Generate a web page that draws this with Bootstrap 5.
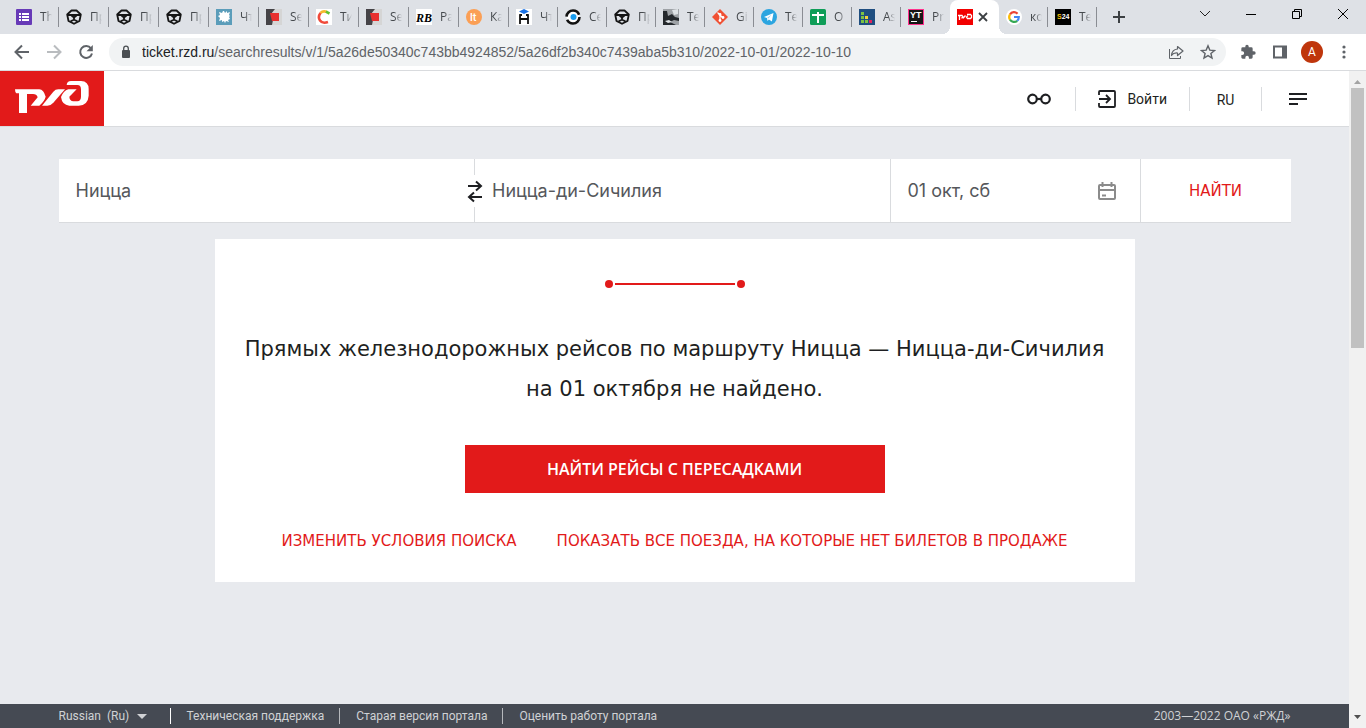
<!DOCTYPE html>
<html lang="ru">
<head>
<meta charset="utf-8">
<meta name="viewport" content="width=device-width, initial-scale=1">
<title>РЖД — поиск билетов</title>
<link href="https://cdn.jsdelivr.net/npm/bootstrap@5.3.0/dist/css/bootstrap.min.css" rel="stylesheet">
<style>
  :root { --rzd-red: #e21a1a; --line: #d9dbde; --ink: #1e1f22; --ui: "Open Sans", "Noto Sans", sans-serif; --page: Roboto, "Liberation Sans", sans-serif; --wide: "DejaVu Sans", "Noto Sans", sans-serif; }
  body { background: #e8eaee; font-family: var(--page); color: var(--ink); }
  svg { display: block; flex: none; }
  .plain { border: 0; background: none; padding: 0; color: inherit; }

  /* browser frame */
  .tabs { background: #dee1e6; height: 34px; padding-left: 9px; font: 12px/16px var(--ui); color: #45494d; }
  .tab { width: 50px; height: 34px; padding-left: 7px; gap: 8px; flex: none; position: relative; color: inherit; text-decoration: none; }
  .tab:nth-child(n+11) { width: 49px; }
  .tab::after { content: ""; position: absolute; right: 0; top: 7px; width: 1px; height: 20px; background: #8a8d93; }
  .tab-name { width: 12px; overflow: hidden; white-space: nowrap; -webkit-mask-image: linear-gradient(90deg, #000 40%, transparent); mask-image: linear-gradient(90deg, #000 40%, transparent); }
  .tab.current { background: #fff; border-radius: 8px 8px 0 0; gap: 5px; }
  .tab.current::after, .tab.before-current::after { display: none; }
  .tab.current::before { content: ""; position: absolute; left: -8px; right: -8px; bottom: 0; height: 8px;
    background: radial-gradient(circle at 0 0, transparent 8px, #fff 8px) left / 8px 8px no-repeat, radial-gradient(circle at 100% 0, transparent 8px, #fff 8px) right / 8px 8px no-repeat; }
  .tab svg, .tab button { position: relative; z-index: 1; }
  .win-buttons { gap: 34px; padding-right: 17px; padding-bottom: 6px; }
  .toolbar { height: 37px; background: #fff; border-bottom: 1px solid var(--line); padding: 0 14px; color: #5f6368; }
  .address { height: 28px; border-radius: 14px; background: #f1f3f4; padding: 0 10px 0 12px; margin-left: 15px; margin-right: 14px; }
  .url-text { font: 14px/20px "Liberation Sans", sans-serif; color: #5f6368; margin-left: 11px; text-decoration: none; white-space: nowrap; overflow: hidden; }
  .url-text b { font-weight: 400; color: #202124; }
  .avatar { width: 22px; height: 22px; margin: 0 13px; border-radius: 50%; background: #bf360c; color: #fff; font: 12px/22px var(--page); }

  /* site header */
  .site-head { height: 56px; border-bottom: 1px solid var(--line); font-size: 14px; padding-right: 16px; }
  .logo { width: 104px; background: var(--rzd-red); }
  .head-item { min-width: 72px; height: 24px; gap: 11px; line-height: 26px; }
  .head-item + .head-item { border-left: 1px solid var(--line); }
  .head-item.login { padding: 0 22px; }

  /* search */
  .frame-row { max-width: 1232px; width: calc(100% - 32px); margin: 0 auto; }
  .search { margin-top: 32px; display: grid; grid-template-columns: 1fr 1fr 250px 151px; height: 64px; background: #fff; border-bottom: 1px solid var(--line); }
  .search > * { min-width: 0; }
  .search > * + * { border-left: 1px solid var(--line); }
  .search input { border: 0; outline: 0; background: none; width: 100%; min-width: 0; padding: 0 17px; font: 18px/24px Inter, Roboto, sans-serif; color: #55575b; }
  .swap { position: absolute; left: -8px; top: 16px; width: 16px; height: 32px; background: #fff; }
  .caps { font: 15px/24px var(--wide); color: var(--rzd-red); text-decoration: none; }
  .search button.caps { border-left: 1px solid var(--line); }

  /* result */
  .result { max-width: 920px; width: calc(100% - 32px); margin: 16px auto; padding: 41px 24px 29px; background: #fff; }
  .result h1 { font: 21px/40px var(--wide); margin: 41px 0 36px; color: var(--ink); }
  .find { width: 420px; max-width: 100%; height: 48px; background: var(--rzd-red); color: #fff; font: 600 16px/24px var(--ui); }
  .more { gap: 0 40px; margin-top: 36px; }

  /* footer */
  .site-foot { height: 24px; background: #454a53; color: #d0d2d5; font-size: 12px; line-height: 24px; }
  .site-foot a { color: inherit; text-decoration: none; }
  .site-foot select { appearance: none; border: 0; background: none; color: inherit; font: inherit; padding: 0; width: 74px; }
  .copy { font-family: "Open Sans", sans-serif; }
  .bar { width: 1px; height: 16px; background: #b5b8bc; margin: 0 16px 0 15px; }

  .scroll { width: 17px; background: #f1f1f1; padding: 5px 2px; }
  .thumb { height: 260px; background: #c1c1c1; }
</style>
</head>
<body>
<svg width="0" height="0" class="position-absolute">
  <symbol id="emblem" viewBox="0 0 16 16"><g fill="none" stroke="#151515" stroke-width="1.800" stroke-linejoin="round"><path d="M5.500 1.500h5l4.300 4-1.300 6.500L8 14.800 2.500 12 1.200 5.500Z"/><path d="M2 6h12M5.500 6.500 8 8.500l2.500-2M8 8.500v2M4.500 12.500 8 10.500l3.500 2"/></g></symbol>
  <symbol id="redblock" viewBox="0 0 16 16"><path fill="#d5d5d5" d="M0 0h16v16H0z"/><path fill="#454347" d="M0 0h9l-4 5 2 6-1 5H0z"/><path fill="#e8302f" d="M4 4h9v8H6z"/></symbol>
</svg>
<div class="d-flex flex-column vh-100 overflow-hidden">
  <nav class="tabs d-flex" aria-label="Вкладки">
    <a href="#" class="tab d-flex align-items-center"><svg width="16" height="16"><rect width="16" height="16" rx="1" fill="#673ab7"/><path d="M3 4h2v2H3zm3 0h7v2H6zM3 7h2v2H3zm3 0h7v2H6zm-3 3h2v2H3zm3 0h7v2H6z" fill="#fff"/></svg><span class="tab-name">Th</span></a>
    <a href="#" class="tab d-flex align-items-center"><svg width="16" height="16"><use href="#emblem"/></svg><span class="tab-name">Пр</span></a>
    <a href="#" class="tab d-flex align-items-center"><svg width="16" height="16"><use href="#emblem"/></svg><span class="tab-name">Пр</span></a>
    <a href="#" class="tab d-flex align-items-center"><svg width="16" height="16"><use href="#emblem"/></svg><span class="tab-name">Пр</span></a>
    <a href="#" class="tab d-flex align-items-center"><svg width="16" height="16"><rect width="16" height="16" fill="#5b9dba"/><path fill="#fff" d="m8 2 1 2 2-2v2l3-1-1 3 1 1-1 1 1 2-2 1 1 2-3-1-1 2-1-2-2 1v-2l-3 1 1-3-2-2 2-1-1-3 3 1 1-2z"/></svg><span class="tab-name">Чт</span></a>
    <a href="#" class="tab d-flex align-items-center"><svg width="16" height="16"><use href="#redblock"/></svg><span class="tab-name">Se</span></a>
    <a href="#" class="tab d-flex align-items-center"><svg width="16" height="16"><path fill="#fff" d="M0 0h16v16H0z"/><g fill="none" stroke-width="2.600"><path d="M11 3Q7 1.500 4.500 4" stroke="#f5b82e"/><path d="M10 2.700 13.500 4.500" stroke="#63c132"/><path d="M4.500 4Q1.500 8 4 11.500T12 13" stroke="#f04a3a"/></g></svg><span class="tab-name">Ти</span></a>
    <a href="#" class="tab d-flex align-items-center"><svg width="16" height="16"><use href="#redblock"/></svg><span class="tab-name">Se</span></a>
    <a href="#" class="tab d-flex align-items-center"><svg width="16" height="16"><path fill="#fff" d="M0 0h16v16H0z"/><text x="0" y="13" font-family="Liberation Serif" font-size="12" font-style="italic" font-weight="700">RB</text></svg><span class="tab-name">Ра</span></a>
    <a href="#" class="tab d-flex align-items-center"><svg width="16" height="16"><circle cx="8" cy="8" r="8" fill="#fb9f55"/><text x="4" y="12" font-family="Roboto" font-size="11" font-weight="500" fill="#fff">lt</text></svg><span class="tab-name">Ка</span></a>
    <a href="#" class="tab d-flex align-items-center"><svg width="16" height="16"><path fill="#fff" d="M0 0h16v16H0z"/><path fill="#1a73e8" d="m8 0 5 2.500L8 5 3 2.500z"/><path d="M4 6v9M12 6v9M4 10h8M3.200 6H6M10 6h2.800" stroke="#111" stroke-width="1.800"/></svg><span class="tab-name">Чт</span></a>
    <a href="#" class="tab d-flex align-items-center"><svg width="16" height="16"><circle cx="8" cy="8" r="6.500" fill="#fff"/><circle cx="8" cy="8" r="6.500" fill="none" stroke="#111" stroke-width="2.600" stroke-dasharray="17 3.400"/><circle cx="8.500" cy="8" r="3" fill="#189cf0"/></svg><span class="tab-name">Се</span></a>
    <a href="#" class="tab d-flex align-items-center"><svg width="16" height="16"><use href="#emblem"/></svg><span class="tab-name">Пр</span></a>
    <a href="#" class="tab d-flex align-items-center"><svg width="16" height="16"><path fill="#9ea2a6" d="M0 0h16v16H0z"/><path fill="#24282c" d="M0 2h4l1 5 4-2 3 3 4 1v3l-5-1-4 2 6 3H0z"/><path fill="#dfe3e6" d="m9 1 6-1v5l-4 1zM2 12l4-1 3 2-4 1z"/></svg><span class="tab-name">Те</span></a>
    <a href="#" class="tab d-flex align-items-center"><svg width="16" height="16"><path fill="#f05033" d="m8 0 8 8-8 8-8-8z"/><path d="M5.500 3.500 8 6v5.500M8 6l3 3" fill="none" stroke="#fff" stroke-width="1.200"/><g fill="#fff"><circle cx="8" cy="5.500" r="1.400"/><circle cx="8" cy="11.500" r="1.400"/><circle cx="11" cy="8.500" r="1.400"/></g></svg><span class="tab-name">Gi</span></a>
    <a href="#" class="tab d-flex align-items-center"><svg width="16" height="16"><circle cx="8" cy="8" r="8" fill="#2ca5e0"/><path fill="#fff" d="m3 8 9.500-4-1.600 8.500-3-2-1.400 1.600-.5-3z"/><path d="m6 9 4.500-3.500L7.500 9.500" fill="#9ed0ee"/></svg><span class="tab-name">Те</span></a>
    <a href="#" class="tab d-flex align-items-center"><svg width="16" height="16"><rect width="16" height="16" rx="1.500" fill="#0f9d58"/><path d="M7 3h2v2h5v2H9v7H7V7H2V5h5z" fill="#fff"/></svg><span class="tab-name">О</span></a>
    <a href="#" class="tab d-flex align-items-center"><svg width="16" height="16"><path fill="#1f4e80" d="M0 0h16v16H0z"/><path fill="#7dc243" d="M2 3h3v3H2zm0 4h3v3H2zm0 4h3v3H2zm4 0h3v3H6z"/><path fill="#f4d13e" d="M6 7h3v3H6z"/><path fill="#e0245e" d="M10 11h3v3h-3z"/></svg><span class="tab-name">As</span></a>
    <a href="#" class="tab before-current d-flex align-items-center"><svg width="16" height="16"><path fill="#ff318c" d="M0 0h16v16H0z"/><path fill="#161616" d="M1 1h14v14H1z"/><text x="2" y="9" font-family="Liberation Sans" font-size="9" font-weight="700" fill="#fff">YT</text><path d="M3 12h6v1H3z" fill="#fff"/></svg><span class="tab-name">Pr</span></a>
    <a href="#" class="tab current d-flex align-items-center"><svg width="16" height="16" viewBox="0 0 16 16"><path fill="#f20000" d="M0 0h16v16H0z"/><g fill="none" stroke="#fff" stroke-width="1.300"><path d="M1 6.500h4L6 8 4.500 9.200M2.500 6.500V11M6 9.300 8.500 6.500M10 5.500h3.500l1 1v2l-1 1h-3L9.500 8l1.300-1.200"/></g></svg><button class="plain" aria-label="Закрыть вкладку"><svg width="10" height="16"><path d="m1 4 8 8m0-8-8 8" stroke="#3c4043" stroke-width="1.800"/></svg></button></a>
    <a href="#" class="tab d-flex align-items-center"><svg width="16" height="16" viewBox="0 0 16 16"><circle cx="8" cy="8" r="8" fill="#fff"/><g fill="none" stroke-width="2.200"><path d="M4 5.300A4.800 4.800 0 0 1 11.500 4.700" stroke="#ea4335"/><path d="M4 5.300a5 5 0 0 0 0 5.400" stroke="#fbbc05"/><path d="M4 10.700a4.800 4.800 0 0 0 7.200 1.100" stroke="#34a853"/><path d="M11.200 11.800Q12.800 10.300 12.800 8H8" stroke="#4285f4"/></g></svg><span class="tab-name">ко</span></a>
    <a href="#" class="tab d-flex align-items-center"><svg width="16" height="16"><path d="M0 0h16v16H0z"/><text x="2" y="10" font-family="Liberation Sans" font-size="7" font-weight="700" fill="#fff"><tspan fill="#f7c600">S</tspan>24</text></svg><span class="tab-name">Те</span></a>
    <button class="plain ms-3" aria-label="Новая вкладка"><svg width="12" height="12"><path d="M6 0v12M0 6h12" stroke="#3c4043" stroke-width="2"/></svg></button>
    <div class="win-buttons d-flex align-items-center ms-auto">
      <button class="plain" aria-label="Список вкладок"><svg width="12" height="12"><path d="m1 3 5 5 5-5" fill="none" stroke="#222"/></svg></button>
      <button class="plain" aria-label="Свернуть"><svg width="12" height="12"><path d="M1 6.500h10" stroke="#000"/></svg></button>
      <button class="plain" aria-label="Развернуть"><svg width="12" height="12"><path d="M1.500 3.500h7v7h-7zM3.500 3.500v-2h7v7h-2" fill="none" stroke="#000"/></svg></button>
      <button class="plain" aria-label="Закрыть"><svg width="12" height="12"><path d="m1 1 10 10M11 1 1 11" stroke="#000"/></svg></button>
    </div>
  </nav>
  <div class="toolbar d-flex align-items-center">
    <button class="plain" aria-label="Назад"><svg width="16" height="16"><path d="M15 8H2m6-6.500L1.500 8 8 14.500" fill="none" stroke="currentColor" stroke-width="2"/></svg></button>
    <button class="plain ms-3" aria-label="Вперёд"><svg width="16" height="16"><path d="M1 8h13M8 1.500 14.500 8 8 14.500" fill="none" stroke="#b9bcbf" stroke-width="2"/></svg></button>
    <button class="plain ms-3" aria-label="Обновить"><svg width="16" height="16"><path d="M13 4.300A6 6 0 1 0 14 9.500" fill="none" stroke="currentColor" stroke-width="2"/><path d="M14.800 1v6.300H8.500z" fill="currentColor"/></svg></button>
    <div class="address d-flex align-items-center flex-grow-1">
      <svg width="10" height="14"><rect x="1" y="5" width="8" height="8" rx="1" fill="#4b4f53"/><path d="M2.700 6V3.500a2.300 2.300 0 0 1 4.600 0V6" fill="none" stroke="#4b4f53" stroke-width="1.300"/></svg>
      <a class="url-text" href="#"><b>ticket.rzd.ru</b>/searchresults/v/1/5a26de50340c743bb4924852/5a26df2b340c7439aba5b310/2022-10-01/2022-10-10</a>
      <button class="plain ms-auto" aria-label="Поделиться"><svg width="16" height="16"><path d="M1.500 5v9.500h11V12" fill="none" stroke="currentColor"/><path d="M9.500 2.500 15 7 9.500 11.500V9Q5.500 8.500 3.500 11.500 4 5.500 9.500 5z" fill="none" stroke="currentColor" stroke-width="1.200" stroke-linejoin="round"/></svg></button>
      <button class="plain ms-3" aria-label="Закладка"><svg width="16" height="16"><path d="m8 1.800 1.800 4.300 4.700.4-3.600 3 1.100 4.600L8 11.600l-4 2.500 1.100-4.600-3.600-3 4.700-.4z" fill="none" stroke="currentColor" stroke-width="1.400"/></svg></button>
    </div>
    <button class="plain" aria-label="Расширения"><svg width="16" height="16" viewBox="0 0 24 24"><path fill="currentColor" d="M21 11h-2V7a2 2 0 0 0-2-2h-4V3.500a2.500 2.500 0 0 0-5 0V5H4a2 2 0 0 0-2 2v4h1.500a2.700 2.700 0 0 1 0 5.400H2V20c0 1 1 2 2 2h4v-1.500a2.700 2.700 0 0 1 5.400 0V22H17a2 2 0 0 0 2-2v-4h2a2.500 2.500 0 0 0 0-5z"/></svg></button>
    <button class="plain ms-3" aria-label="Боковая панель"><svg width="16" height="16"><path d="M2 2.500h12v11H2z" fill="none" stroke="currentColor" stroke-width="2"/><path d="M10 2h4v12h-4z" fill="currentColor"/></svg></button>
    <button class="plain avatar" aria-label="Профиль">A</button>
    <button class="plain" aria-label="Меню"><svg width="16" height="16"><g fill="currentColor"><circle cx="8" cy="3" r="1.600"/><circle cx="8" cy="8" r="1.600"/><circle cx="8" cy="13" r="1.600"/></g></svg></button>
  </div>

  <div class="d-flex flex-grow-1 overflow-hidden">
    <div class="d-flex flex-column flex-grow-1 overflow-hidden">
      <header class="site-head d-flex align-items-stretch bg-white">
        <a class="logo" href="#" aria-label="РЖД"><svg width="104" height="55" viewBox="0 18 312 165" fill="#fff"><path d="M45 73H118Q131 74 137 95Q134 108 118 122H92L113 97Q110 87 99 87H81V144H57V85H49Q45 82 45 73Z"/><path d="M126 122 160 80Q166 73 175 73H195L160 113Q152 122 142 122Z"/><path fill-rule="evenodd" d="M200 60Q201 48 213 48H243Q266 49 266 72V92Q264 121 236 122H208Q186 120 183 96Q190 78 205 73H230L208 95Q209 108 220 109H232Q243 107 243 95V73Q243 60 232 60Z"/></svg></a>
        <nav class="d-flex align-items-center ms-auto">
          <button class="plain head-item d-flex align-items-center justify-content-center" aria-label="Версия для слабовидящих"><svg width="24" height="14"><g fill="none" stroke="#1e1f22" stroke-width="2.200"><circle cx="5.500" cy="7" r="4.300"/><circle cx="18.500" cy="7" r="4.300"/><path d="M9.800 7h4.400"/></g></svg></button>
          <a href="#" class="head-item login d-flex align-items-center text-reset text-decoration-none"><svg width="18" height="18"><path d="M1 5V2q0-1 1-1h14q1 0 1 1v14q0 1-1 1H2q-1 0-1-1v-3M1 9h11M8 5l4 4-4 4" fill="none" stroke="#1e1f22" stroke-width="1.800"/></svg>Войти</a>
          <button class="plain head-item">RU</button>
          <button class="plain head-item d-flex align-items-center justify-content-center" aria-label="Меню"><svg width="18" height="12"><path d="M0 1h18M0 6h18M0 11h9" stroke="#1e1f22" stroke-width="2"/></svg></button>
        </nav>
      </header>

      <main class="flex-grow-1 overflow-hidden">
        <form class="search frame-row">
          <div class="d-flex"><input aria-label="Откуда" value="Ницца"></div>
          <div class="d-flex position-relative"><button type="button" class="plain swap" aria-label="Поменять местами"><svg width="16" height="32"><path d="M1 11h13M9 6.500l5 4.500-5 4.500M15 22H2M7 17.500 2 22l5 4.500" fill="none" stroke="#1e1f22" stroke-width="2"/></svg></button><input aria-label="Куда" value="Ницца-ди-Сичилия"></div>
          <div class="d-flex align-items-center pe-4"><input aria-label="Дата" value="01 окт, сб"><svg width="18" height="18"><g fill="none" stroke="#8b8b8b" stroke-width="2"><rect x="1" y="3" width="16" height="14" rx="1"/><path d="M1 8h16M4.500 0v5M13.500 0v5M4 13.500h4"/></g></svg></div>
          <button type="submit" class="plain caps">НАЙТИ</button>
        </form>
        <section class="result text-center">
          <svg width="140" height="8" class="mx-auto"><path d="M10 4h120" stroke="#e21a1a" stroke-width="2"/><circle cx="4" cy="4" r="4" fill="#e21a1a"/><circle cx="136" cy="4" r="4" fill="#e21a1a"/></svg>
          <h1>Прямых железнодорожных рейсов по маршруту Ницца — Ницца-ди-Сичилия<br>на 01 октября не найдено.</h1>
          <button class="plain find">НАЙТИ РЕЙСЫ С ПЕРЕСАДКАМИ</button>
          <div class="more d-flex flex-wrap justify-content-center">
            <a class="caps" href="#">ИЗМЕНИТЬ УСЛОВИЯ ПОИСКА</a>
            <a class="caps" href="#">ПОКАЗАТЬ ВСЕ ПОЕЗДА, НА КОТОРЫЕ НЕТ БИЛЕТОВ В ПРОДАЖЕ</a>
          </div>
        </section>
      </main>

      <footer class="site-foot">
        <div class="frame-row d-flex align-items-center">
          <select aria-label="Язык"><option>Russian&nbsp; (Ru)</option></select>
          <svg width="10" height="5" class="ms-1 me-2"><path d="M0 0h10L5 5z" fill="#d0d2d5"/></svg>
          <span class="bar bg-white"></span><a href="#">Техническая поддержка</a>
          <span class="bar"></span><a href="#">Старая версия портала</a>
          <span class="bar"></span><a href="#">Оценить работу портала</a>
          <span class="copy ms-auto">2003—2022 ОАО «РЖД»</span>
        </div>
      </footer>
    </div>
    <div class="scroll d-flex flex-column">
      <svg width="13" height="12"><path d="M3 8h7L6.500 4z" fill="#a3a3a3"/></svg>
      <div class="thumb"></div>
      <svg width="13" height="12" class="mt-auto"><path d="M3 4h7L6.500 8z" fill="#505050"/></svg>
    </div>
  </div>
</div>
<script src="https://cdn.jsdelivr.net/npm/bootstrap@5.3.0/dist/js/bootstrap.bundle.min.js"></script>
</body>
</html>
